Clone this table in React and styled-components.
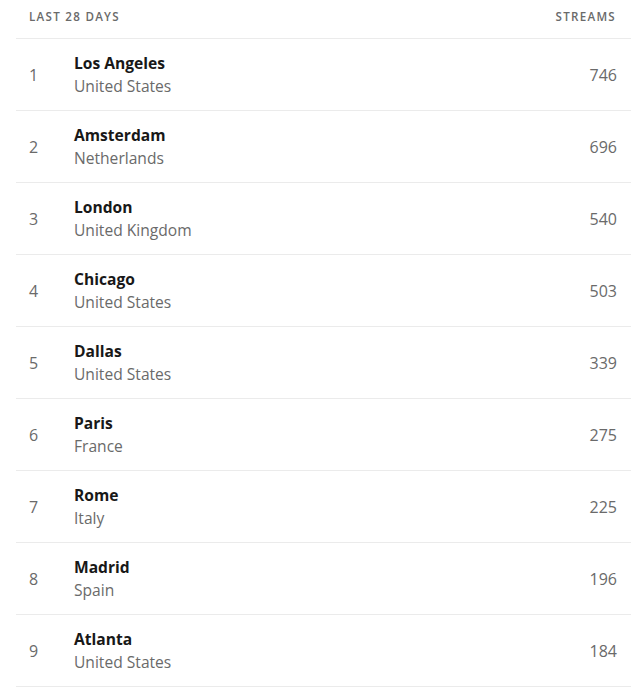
import React from "react";
import styled, { createGlobalStyle } from "styled-components";

const GlobalStyle = createGlobalStyle`
  body {
    margin: 0;
    background: #fff;
    font-family: "Open Sans", "Liberation Sans", Arial, sans-serif;
  }
`;

const Table = styled.div`
  margin: 0 11px 0 16px;
`;

const HeaderRow = styled.div`
  height: 39px;
  display: flex;
  align-items: center;
  justify-content: space-between;
  padding: 0 15px 5px 13px;
  border-bottom: 1px solid #ebebeb;
  box-sizing: border-box;
  font-size: 11.6px;
  font-weight: 600;
  letter-spacing: 0.11em;
  color: #6a6a6a;
  text-transform: uppercase;
`;

const Row = styled.div`
  height: 72px;
  display: grid;
  grid-template-columns: 45px 1fr auto;
  align-items: center;
  padding: 0 14px 0 13px;
  border-bottom: 1px solid #ebebeb;
  box-sizing: border-box;
`;

const Rank = styled.div`
  font-size: 16px;
  color: #6a6a6a;
`;

const Place = styled.div`
  display: flex;
  flex-direction: column;
  padding-top: 1px;
`;

const City = styled.div`
  font-size: 15.6px;
  font-weight: 700;
  color: #181818;
  line-height: 23px;
`;

const Country = styled.div`
  font-size: 15.6px;
  color: #6a6a6a;
  line-height: 23px;
`;

const Streams = styled.div`
  font-size: 16px;
  color: #6a6a6a;
  text-align: right;
`;

const data = [
  ["Los Angeles", "United States", 746],
  ["Amsterdam", "Netherlands", 696],
  ["London", "United Kingdom", 540],
  ["Chicago", "United States", 503],
  ["Dallas", "United States", 339],
  ["Paris", "France", 275],
  ["Rome", "Italy", 225],
  ["Madrid", "Spain", 196],
  ["Atlanta", "United States", 184],
];

export default function App() {
  return (
    <>
      <GlobalStyle />
      <Table>
        <HeaderRow>
          <span>Last 28 days</span>
          <span>Streams</span>
        </HeaderRow>
        {data.map(([city, country, n], i) => (
          <Row key={city}>
            <Rank>{i + 1}</Rank>
            <Place>
              <City>{city}</City>
              <Country>{country}</Country>
            </Place>
            <Streams>{n}</Streams>
          </Row>
        ))}
      </Table>
    </>
  );
}
